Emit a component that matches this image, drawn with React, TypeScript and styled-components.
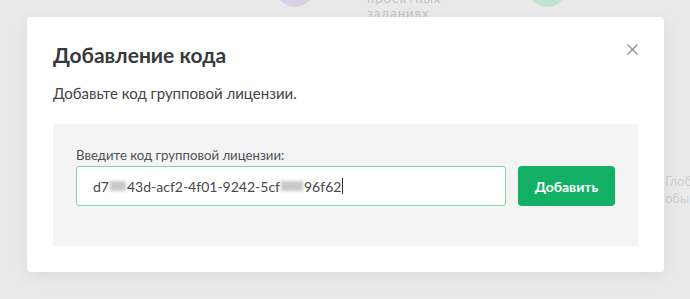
import React from "react";
import styled, { createGlobalStyle } from "styled-components";

const GlobalStyle = createGlobalStyle`
  html, body {
    margin: 0;
    padding: 0;
    background: #eaeaea;
    font-family: Lato, "Open Sans", "Liberation Sans", sans-serif;
  }
`;

const Page = styled.div`
  position: relative;
  width: 690px;
  height: 299px;
  overflow: hidden;
  background: #eaeaea;
`;

const Backdrop = styled.div`
  display: flex;
  align-items: flex-start;
  margin-top: -40px;
  padding-left: 276px;
  gap: 53px;
`;

const Circle = styled.div<{ color: string }>`
  width: 38px;
  height: 38px;
  border-radius: 50%;
  background: ${(p) => p.color};
  margin-top: 9px;
`;

const FaintText = styled.div`
  width: 108px;
  font-size: 13px;
  line-height: 15px;
  letter-spacing: 1px;
  color: #c4c4c4;
  padding-top: 31px;
  white-space: nowrap;
`;

const SideText = styled.div`
  position: absolute;
  left: 665px;
  top: 173px;
  font-size: 13px;
  line-height: 17px;
  color: #cfcfcf;
`;

const Overlay = styled.div`
  position: absolute;
  inset: 0;
  padding: 17px 26px 0 27px;
`;

const Modal = styled.div`
  position: relative;
  box-sizing: border-box;
  width: 637px;
  height: 255px;
  background: #fff;
  border-radius: 4px;
  box-shadow: 0 4px 18px rgba(0, 0, 0, 0.07);
  padding: 24px 26px 0 26px;
`;

const Title = styled.h2`
  margin: 0;
  font-size: 21px;
  line-height: 28px;
  font-weight: 700;
  color: #38383d;
`;

const Close = styled.button`
  position: absolute;
  top: 24px;
  right: 24px;
  width: 16px;
  height: 16px;
  border: 0;
  padding: 0;
  background: none;
  display: flex;
  align-items: center;
  justify-content: center;
`;

const Subtitle = styled.p`
  margin: 14px 0 0;
  font-size: 15px;
  line-height: 20px;
  color: #444448;
`;

const Panel = styled.div`
  margin-top: 21px;
  height: 122px;
  background: #f4f4f4;
  box-sizing: border-box;
  padding: 23px 23px 0;
`;

const Label = styled.div`
  font-size: 13.2px;
  line-height: 16px;
  color: #505055;
  margin-bottom: 3px;
`;

const Row = styled.div`
  display: flex;
  align-items: center;
  gap: 12px;
`;

const Field = styled.div`
  box-sizing: border-box;
  width: 430px;
  height: 40px;
  border: 1px solid #7fd8a8;
  border-radius: 3px;
  background: #fff;
  display: flex;
  align-items: center;
  padding-left: 16px;
  font-size: 14px;
  color: #47474c;
`;

const Hidden = styled.span<{ w: number }>`
  display: inline-block;
  width: ${(p) => p.w}px;
  height: 10px;
  background: #c9c9c9;
  filter: blur(1.5px);
  margin: 0 1px;
`;

const Caret = styled.span`
  display: inline-block;
  width: 1px;
  height: 16px;
  background: #333;
  margin-left: 1px;
`;

const AddButton = styled.button`
  width: 97px;
  height: 40px;
  border: 0;
  border-radius: 4px;
  background: #12b064;
  color: #fff;
  font-family: inherit;
  font-size: 14px;
  font-weight: 700;
  cursor: pointer;
`;

export default function App() {
  return (
    <Page>
      <GlobalStyle />
      <Backdrop>
        <Circle color="#d9d0e6" />
        <FaintText>
          проектных
          <br />
          заданиях
        </FaintText>
        <Circle color="#bfe3cf" />
      </Backdrop>
      <SideText>
        Глоб
        <br />
        обы
      </SideText>
      <Overlay>
        <Modal>
          <Title>Добавление кода</Title>
          <Close aria-label="close">
            <svg width="11" height="11" viewBox="0 0 11 11">
              <path d="M0.5 0.5L10.5 10.5M10.5 0.5L0.5 10.5" stroke="#8a8a9c" strokeWidth="1.2" />
            </svg>
          </Close>
          <Subtitle>Добавьте код групповой лицензии.</Subtitle>
          <Panel>
            <Label>Введите код групповой лицензии:</Label>
            <Row>
              <Field>
                d7<Hidden w={16} />43d-acf2-4f01-9242-5cf<Hidden w={22} />96f62
                <Caret />
              </Field>
              <AddButton>Добавить</AddButton>
            </Row>
          </Panel>
        </Modal>
      </Overlay>
    </Page>
  );
}
